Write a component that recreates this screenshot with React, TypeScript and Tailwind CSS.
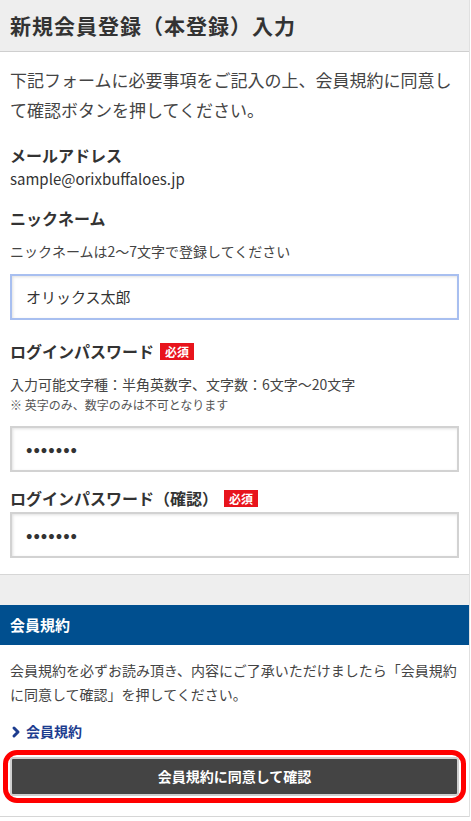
import { ChevronRight } from "lucide-react";

const font = { fontFamily: '"Noto Sans CJK JP", "Noto Sans", sans-serif' };

function Required() {
  return (
    <span className="inline-block bg-[#e8141c] px-[5px] text-[12px] font-bold leading-[17px] text-white">
      必須
    </span>
  );
}

function Field({ value, focused, secret }: { value: string; focused?: boolean; secret?: boolean }) {
  return (
    <div
      className={
        "flex h-[46px] items-center border-2 bg-white px-[14px] shadow-[inset_1px_1px_3px_rgba(0,0,0,0.12)] " +
        (focused ? "border-[#a8bff0]" : "border-[#d2d2d2]")
      }
    >
      <span
        className={
          secret
            ? "text-[17px] font-bold tracking-[1px] text-[#333]"
            : "text-[15px] text-[#333]"
        }
      >
        {value}
      </span>
    </div>
  );
}

export default function App() {
  return (
    <div className="min-h-[821px] w-[471px] bg-white text-[#333]" style={font}>
      <div className="w-[470px] border-r border-[#e0e0e0]">
        <div className="flex h-[52px] items-center border-b border-[#cfcfcf] bg-[#eeeeee] px-[10px]">
          <h1 className="text-[21px] font-bold tracking-[1px] text-[#333]">
            新規会員登録（本登録）入力
          </h1>
        </div>

        <div className="px-[10px] pb-[16px]">
          <p className="mt-[13px] text-[17px] leading-[30px] text-[#444]">
            下記フォームに必要事項をご記入の上、会員規約に同意して確認ボタンを押してください。
          </p>

          <div className="mt-[17px] text-[16px] font-bold leading-[26px]">メールアドレス</div>
          <div className="text-[15px] leading-[22px]">sample@orixbuffaloes.jp</div>

          <div className="mt-[15px] text-[16px] font-bold leading-[26px]">ニックネーム</div>
          <div className="mt-[9px] text-[14px] leading-[22px] text-[#444]">
            ニックネームは2〜7文字で登録してください
          </div>
          <div className="mt-[12px]">
            <Field value="オリックス太郎" focused />
          </div>

          <div className="mt-[18px] flex items-center gap-[6px] text-[16px] font-bold leading-[26px]">
            ログインパスワード
            <Required />
          </div>
          <div className="mt-[9px] text-[14px] leading-[22px] text-[#444]">
            入力可能文字種：半角英数字、文字数：6文字〜20文字
          </div>
          <div className="mt-[1px] text-[12px] leading-[18px] text-[#555]">※ 英字のみ、数字のみは不可となります</div>
          <div className="mt-[12px]">
            <Field value="•••••••" secret />
          </div>

          <div className="mt-[13px] flex items-center gap-[6px] text-[16px] font-bold leading-[26px]">
            ログインパスワード（確認）
            <Required />
          </div>
          <div className="mt-[1px]">
            <Field value="•••••••" secret />
          </div>
        </div>

        <div className="h-[31px] border-t border-[#d6d6d6] bg-[#eeeeee]" />

        <div className="flex h-[40px] items-center bg-[#004f8f] px-[10px]">
          <h2 className="text-[15px] font-bold text-white">会員規約</h2>
        </div>

        <div className="px-[10px] pb-[13px]">
          <p className="mt-[13px] text-[14px] leading-[24px] text-[#444]">
            会員規約を必ずお読み頂き、内容にご了承いただけましたら「会員規約に同意して確認」を押してください。
          </p>
          <a className="mt-[15px] flex items-center gap-[2px] text-[14px] font-bold text-[#1d3d8f]">
            <ChevronRight size={16} strokeWidth={4.5} className="-ml-[2px]" />
            会員規約
          </a>
          <div className="-mx-[7px] mt-[8px] rounded-[14px] border-[5px] border-[#ff0000] p-[2px]">
            <button className="flex h-[39px] w-full items-center justify-center rounded-[3px] border-2 border-[#cfcfcf] bg-[#444444] text-[14px] font-bold text-white">
              会員規約に同意して確認
            </button>
          </div>
        </div>
        <div className="border-t border-[#d6d6d6]" />
      </div>
    </div>
  );
}
